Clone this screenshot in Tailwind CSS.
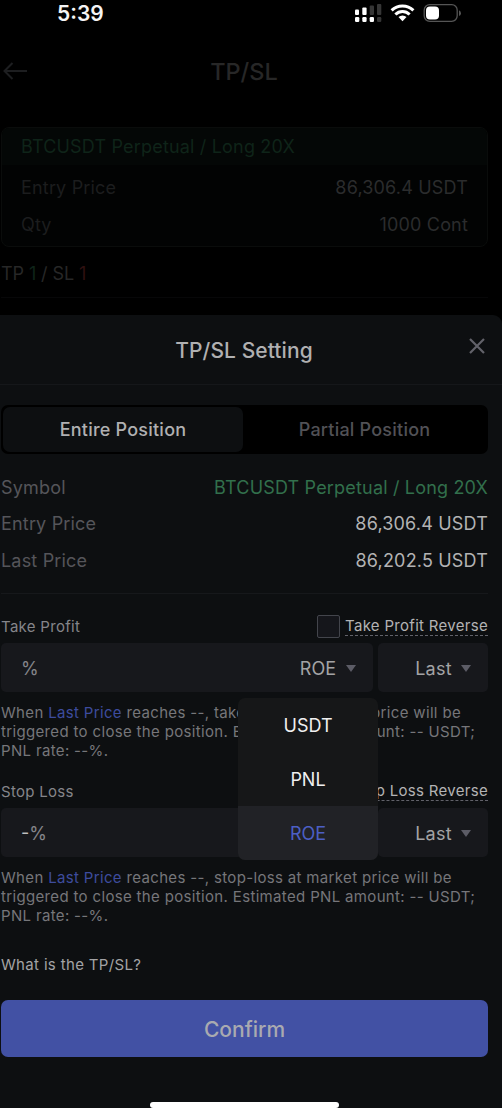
<!DOCTYPE html>
<html lang="en">
<head>
<meta charset="utf-8">
<title>TP/SL Setting</title>
<script src="https://cdn.jsdelivr.net/npm/@tailwindcss/browser@4"></script>
</head>
<body class="bg-black">
<div class="relative flex h-[1108px] w-[502px] flex-col overflow-hidden whitespace-nowrap bg-black font-['Inter','Liberation_Sans',sans-serif]">
  <!-- status bar -->
  <div class="flex h-[28px] items-center pl-[57px] pr-[40px]">
    <span class="text-[21px] font-semibold leading-[28px] text-[#f4f4f4]">5:39</span>
    <svg class="ml-auto" width="108" height="28" viewBox="0 0 108 28">
      <g fill="#fff">
        <rect x="1" y="9.500" width="4" height="5.500" rx="1"/><rect x="8.300" y="7.500" width="4.300" height="7.500" rx="1"/>
        <rect x="1" y="17" width="4.300" height="5" rx="1.200"/><rect x="8.300" y="17" width="4.300" height="5" rx="1.200"/><rect x="15.700" y="17" width="4.300" height="5" rx="1.200"/>
      </g>
      <g fill="#363636"><rect x="15.700" y="5.500" width="4.300" height="9.500" rx="1"/><rect x="23" y="4" width="4.300" height="11" rx="1"/><rect x="23" y="17" width="4.300" height="5" rx="1.200"/></g>
      <g fill="none" stroke="#fff" stroke-width="3"><path d="M37.600 10.400a15.500 15.500 0 0 1 21.800 0"/><path d="M41.400 14.500a10 10 0 0 1 14.200 0"/></g>
      <path d="M48.500 21.200l-4-4.100a5.700 5.700 0 0 1 8 0z" fill="#fff"/>
      <rect x="70.200" y="4.700" width="33" height="16.600" rx="5.500" fill="none" stroke="#555" stroke-width="1.300"/>
      <rect x="72" y="6.500" width="13" height="13" rx="4" fill="#fff"/>
      <path d="M105 10.300q2 .8 2 2.900t-2 2.900z" fill="#555"/>
    </svg>
  </div>
  <!-- dimmed page -->
  <div class="relative flex h-[86px] items-center justify-center pr-[14px] pt-px">
    <svg class="absolute left-[3px] top-[34px]" width="25" height="18" viewBox="0 0 25 18" fill="none" stroke="#1d1e20" stroke-width="2"><path d="M24 9H1.500M9.500 1L1.500 9l8 8"/></svg>
    <span class="text-[23.5px] font-medium leading-[30px] text-[#272727]">TP/SL</span>
  </div>
  <div class="ml-px mt-[13px] flex h-[120px] w-[487px] flex-col rounded-[8px] border border-[#0a0c0b] bg-[#020303] text-[18px] tracking-[0.18px]">
    <div class="flex h-[37px] items-center rounded-t-[7px] bg-[#040706] pl-[19px] text-[#0f2419]">BTCUSDT Perpetual / Long 20X</div>
    <div class="flex h-[45px] items-center justify-between px-[19px]"><span class="text-[#1c1d1e]">Entry Price</span><span class="text-[#2b2c2d]">86,306.4 USDT</span></div>
    <div class="flex h-[28px] items-center justify-between px-[19px]"><span class="text-[#1c1d1e]">Qty</span><span class="text-[#2b2c2d]">1000 Cont</span></div>
  </div>
  <div class="ml-px flex h-[51px] w-[487px] items-center border-b border-[#070708] pt-[2px] text-[18px] tracking-[-0.1px] text-[#272727]"><span>TP <span class="text-[#0f2419]">1</span> / SL <span class="text-[#2f1010]">1</span></span></div>

  <!-- settings sheet -->
  <div class="mt-[17px] flex h-[793px] flex-col rounded-tr-[9px] bg-[#0d0f11]">
    <div class="relative flex h-[70px] items-center justify-center border-b border-[#15171a] pr-[14px] pt-[2px]">
      <span class="text-[21px] font-medium tracking-[0.08px] text-[#b0b0b1]">TP/SL Setting</span>
      <svg class="absolute left-[469px] top-[23px]" width="16" height="16" viewBox="0 0 16 16" stroke="#62626a" stroke-width="2.200"><path d="M1 1l14 14M15 1L1 15"/></svg>
    </div>
    <div class="flex flex-col pl-px pr-[14px]">
      <div class="mt-[20px] flex h-[49px] rounded-[7px] bg-black p-[2px] text-[18px] font-medium tracking-[0.22px]">
        <div class="flex w-[240px] items-center justify-center rounded-[7px] bg-[#0d0f11] text-[#b0b0b1]">Entire Position</div>
        <div class="flex flex-1 items-center justify-center text-[#515156]">Partial Position</div>
      </div>
      <div class="mt-[15px] flex h-[36px] items-center justify-between text-[18px] tracking-[0.18px]"><span class="text-[#55555a]">Symbol</span><span class="text-[#32704c]">BTCUSDT Perpetual / Long 20X</span></div>
      <div class="flex h-[37px] items-center justify-between text-[18px] tracking-[0.18px]"><span class="text-[#55555a]">Entry Price</span><span class="text-[#b3b3b4]">86,306.4 USDT</span></div>
      <div class="flex h-[37px] items-center justify-between text-[18px] tracking-[0.18px]"><span class="text-[#55555a]">Last Price</span><span class="text-[#b3b3b4]">86,202.5 USDT</span></div>
      <div class="mt-[14px] h-px bg-[#16181b]"></div>

      <div class="mt-[20px] flex h-[24px] items-center justify-between text-[15px] tracking-[0.3px]">
        <span class="pt-[2px] text-[#85858a]">Take Profit</span>
        <span class="flex items-center gap-[5px]"><span class="size-[23px] rounded-[2px] border border-[#43454c] bg-[#15161b]"></span><span class="border-b border-dashed border-[#62626a] leading-[19px] text-[#b3b3b4]">Take Profit Reverse</span></span>
      </div>
      <div class="mt-[5px] flex h-[49px] gap-[5px] text-[18px]">
        <div class="flex w-[372px] items-center rounded-[5px] bg-[#17181c] pl-[20px] pr-[17px] pt-px"><span class="text-[#85858a]">%</span><span class="ml-auto text-[#a3a3a5]">ROE</span><svg class="ml-[10px]" width="10" height="7"><path d="M0 0h10L5 7z" fill="#5c5c66"/></svg></div>
        <div class="flex flex-1 items-center justify-end rounded-[5px] bg-[#17181c] pr-[17px] pt-px"><span class="tracking-[0.3px] text-[#a3a3a5]">Last</span><svg class="ml-[9px]" width="10" height="7"><path d="M0 0h10L5 7z" fill="#5c5c66"/></svg></div>
      </div>
      <p class="mt-[11px] h-[57px] text-[15px] leading-[19px] tracking-[0.34px] text-[#76767a]">When <span class="text-[#3d4c9e]">Last Price</span> reaches --, take-profit at market price will be<br>triggered to close the position. Estimated PNL amount: -- USDT;<br>PNL rate: --%.</p>

      <div class="mt-[19px] flex h-[24px] items-center justify-between text-[15px] tracking-[0.3px]">
        <span class="pt-[2px] text-[#85858a]">Stop Loss</span>
        <span class="flex items-center gap-[5px]"><span class="size-[23px] rounded-[2px] border border-[#43454c] bg-[#15161b]"></span><span class="border-b border-dashed border-[#62626a] leading-[19px] text-[#b3b3b4]">Stop Loss Reverse</span></span>
      </div>
      <div class="mt-[5px] flex h-[49px] gap-[5px] text-[18px]">
        <div class="flex w-[372px] items-center rounded-[5px] bg-[#17181c] pl-[20px] pr-[17px] pt-px"><span class="text-[#85858a]"><span class="text-[#c0c0c0]">-</span>%</span><span class="ml-auto text-[#a3a3a5]">ROE</span><svg class="ml-[10px]" width="10" height="7"><path d="M0 0h10L5 7z" fill="#5c5c66"/></svg></div>
        <div class="flex flex-1 items-center justify-end rounded-[5px] bg-[#17181c] pr-[17px] pt-px"><span class="tracking-[0.3px] text-[#a3a3a5]">Last</span><svg class="ml-[9px]" width="10" height="7"><path d="M0 0h10L5 7z" fill="#5c5c66"/></svg></div>
      </div>
      <p class="mt-[11px] h-[57px] text-[15px] leading-[19px] tracking-[0.34px] text-[#76767a]">When <span class="text-[#3d4c9e]">Last Price</span> reaches --, stop-loss at market price will be<br>triggered to close the position. Estimated PNL amount: -- USDT;<br>PNL rate: --%.</p>

      <div class="mt-[30px] h-[20px] text-[15px] leading-[20px] tracking-[0.34px] text-[#a3a3a5]">What is the TP/SL?</div>
      <button class="mt-[25px] flex h-[57px] items-center justify-center rounded-[7px] bg-[#4251a4] pt-[2px] text-[21px] font-medium text-[#a9aab0]">Confirm</button>
    </div>
    <div class="ml-[150px] mt-auto h-[6px] w-[189px] rounded-[3px] bg-white"></div>
  </div>

  <!-- unit menu -->
  <div class="absolute left-[238px] top-[698px] flex h-[162px] w-[140px] flex-col overflow-hidden rounded-[7px] bg-[#161718] text-[18px] text-[#f0f0f0]">
    <div class="flex h-[54px] items-center justify-center pt-px">USDT</div>
    <div class="flex h-[54px] items-center justify-center pt-px">PNL</div>
    <div class="flex h-[54px] items-center justify-center bg-[#212226] pt-px text-[#4c5fc4]">ROE</div>
  </div>
</div>
</body>
</html>
